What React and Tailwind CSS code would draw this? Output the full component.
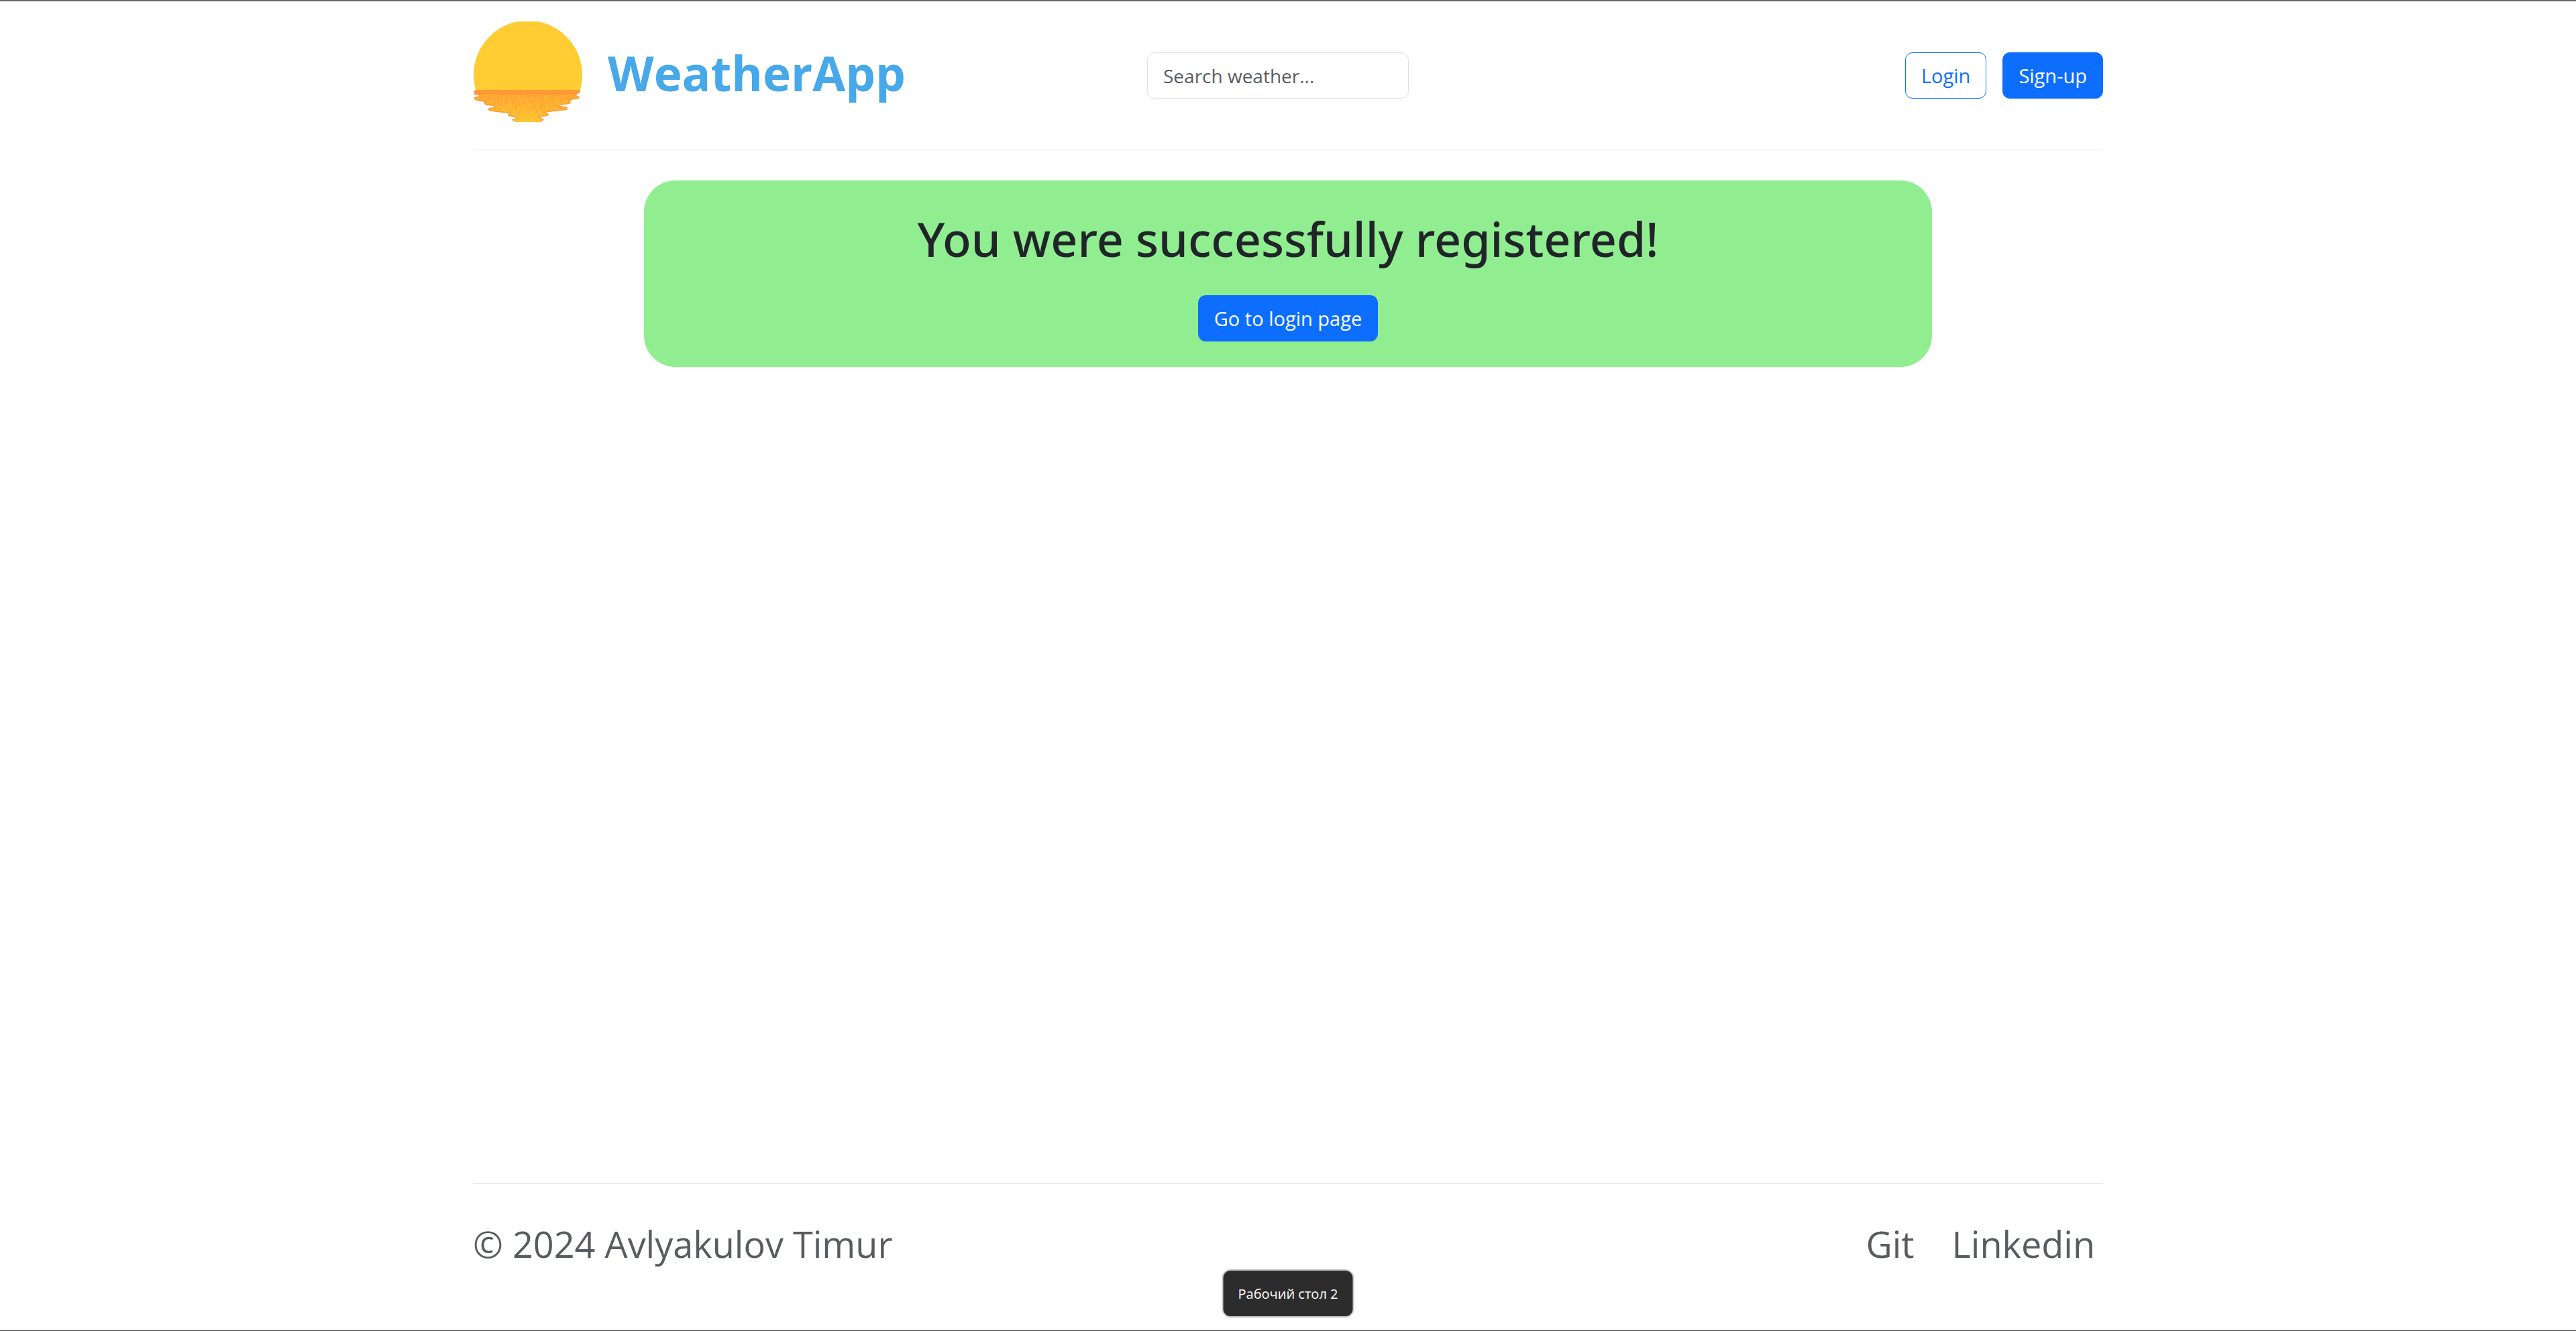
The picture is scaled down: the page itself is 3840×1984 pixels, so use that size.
const REFLECTION =
  "M56 402 L49 412 L52 422 L73 427 L70 432 L55 433 L49 440 L56 447 L76 452 L98 455 L95 462 L103 470 L140 474 L145 478 L118 483 L112 489 L120 496 L150 501 L178 503 L208 506 L200 514 L208 520 L235 523 L238 528 L220 534 L222 539 L240 546 L345 546 L360 538 L362 532 L347 527 L343 522 L375 519 L386 514 L380 508 L368 503 L400 499 L430 495 L466 492 L467 480 L460 478 L430 473 L445 468 L475 465 L485 458 L478 452 L485 447 L518 440 L522 434 L515 429 L500 425 L518 418 L525 410 L524 402 Z";

// Speckles of the sun's reflection: `density` gives the share of filled cells at a depth of 0..1.
function speckles(seed, density) {
  const cell = 4;
  let d = "";
  for (let y = 422; y < 544; y += cell) {
    const depth = (y - 422) / 122;
    for (let x = 48; x < 528; x += cell) {
      const n = Math.sin(x * 12.9898 + y * 78.233 + seed) * 43758.5453;
      if (n - Math.floor(n) < density(depth)) d += `M${x} ${y}h4v4h-4z`;
    }
  }
  return d;
}

const YELLOW = speckles(1, (t) => 0.22 + 0.15 * t);
const ORANGE = speckles(7, (t) => 0.4 - 0.42 * t);
const GREEN = speckles(13, (t) => (t > 0.55 ? 0.06 : 0));

function SunLogo() {
  return (
    <svg viewBox="48 96 486 450" className="h-[150px] w-[162px] shrink-0" aria-hidden="true">
      <defs>
        <clipPath id="sky">
          <rect x="48" y="96" width="486" height="310" />
        </clipPath>
        <clipPath id="water">
          <path d={REFLECTION} />
        </clipPath>
        <linearGradient id="glow" x1="0" y1="402" x2="0" y2="546" gradientUnits="userSpaceOnUse">
          <stop offset="0" stopColor="#ff9933" />
          <stop offset="0.13" stopColor="#ff9933" />
          <stop offset="0.2" stopColor="#ffa533" />
          <stop offset="0.6" stopColor="#ffb333" />
          <stop offset="1" stopColor="#fcc92f" />
        </linearGradient>
      </defs>
      <circle cx="291" cy="335" r="243" fill="#ffcc33" clipPath="url(#sky)" />
      <g clipPath="url(#water)">
        <path d={REFLECTION} fill="url(#glow)" />
        <path d={ORANGE} fill="#ff9f33" />
        <path d={YELLOW} fill="#ffc233" />
        <path d={GREEN} fill="#cccc33" />
        <path d={REFLECTION} fill="none" stroke="#ff9933" strokeWidth="8" />
        <rect x="240" y="541" width="105" height="5" fill="#fcc92f" />
      </g>
    </svg>
  );
}

const button =
  "inline-flex h-[69px] items-center justify-center rounded-[11px] border px-[23px] text-[29px]";
const primary = "border-[#0d6efd] bg-[#0d6efd] text-white";

export default function App() {
  return (
    <div className="flex min-h-screen flex-col border-t-2 border-b border-t-[#666464] border-b-[#3a3a3a] bg-white font-['Open_Sans','Noto_Sans',sans-serif] text-[#212529]">
      <header className="mx-auto grid h-[222px] w-full max-w-[2430px] grid-cols-[67fr_26fr_69fr] items-center border-b border-[#dee2e6]">
        <a href="#" className="mb-3 flex items-center gap-[38px] pl-px">
          <SunLogo />
          <span className="pt-1 text-[71px] leading-[100px] font-bold text-[#47a8ea]">WeatherApp</span>
        </a>
        <form role="search">
          <input
            type="search"
            aria-label="Search weather"
            placeholder="Search weather..."
            className="h-[69px] w-full rounded-[11px] border border-[#dee2e6] px-[23px] text-[28px] placeholder:text-[#595c5f]"
          />
        </form>
        <div className="flex justify-end gap-6">
          <button type="button" className={`${button} border-[#0d6efd] text-[#0d6efd]`}>
            Login
          </button>
          <button type="button" className={`${button} ${primary}`}>
            Sign-up
          </button>
        </div>
      </header>

      <main className="mx-auto mt-[45px] w-1/2 rounded-[47px] bg-[#90ee90] pt-[42px] pb-[38px] text-center">
        <h1 className="mb-[39px] font-['Noto_Sans',sans-serif] text-[70px] leading-[90px] font-medium">
          You were successfully registered!
        </h1>
        <a href="#" className={`${button} ${primary} align-top`}>
          Go to login page
        </a>
      </main>

      <footer className="mx-auto mt-auto flex w-full max-w-[2430px] justify-between border-t border-[#dee2e6] pt-[47px] pb-[87px] text-[54px] leading-[84px] text-[#595c5f]">
        <p>© 2024 Avlyakulov Timur</p>
        <nav className="flex gap-14 pr-3">
          <a href="#">Git</a>
          <a href="#">Linkedin</a>
        </nav>
      </footer>

      <div
        role="status"
        className="fixed bottom-5 left-1/2 flex h-[72px] w-[197px] -translate-x-1/2 items-center justify-center rounded-[13px] border-2 border-[#c8c8c8] bg-[#2c2c2c] pt-0.5 text-[20px] whitespace-nowrap text-white"
      >
        Рабочий стол 2
      </div>
    </div>
  );
}
